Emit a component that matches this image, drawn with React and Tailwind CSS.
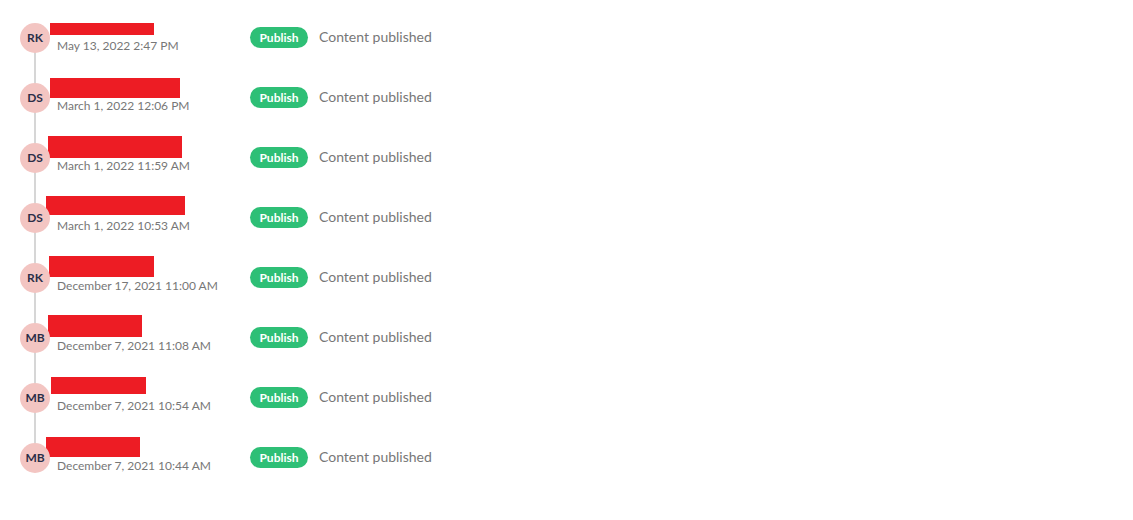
const rows = [
  { initials: 'RK', date: 'May 13, 2022 2:47 PM', mask: { left: 30, top: -15, width: 104, height: 12 } },
  { initials: 'DS', date: 'March 1, 2022 12:06 PM', mask: { left: 30, top: -20, width: 130, height: 20 } },
  { initials: 'DS', date: 'March 1, 2022 11:59 AM', mask: { left: 28, top: -22, width: 134, height: 22 } },
  { initials: 'DS', date: 'March 1, 2022 10:53 AM', mask: { left: 26, top: -22, width: 139, height: 19 } },
  { initials: 'RK', date: 'December 17, 2021 11:00 AM', mask: { left: 29, top: -22, width: 105, height: 21 } },
  { initials: 'MB', date: 'December 7, 2021 11:08 AM', mask: { left: 28, top: -23, width: 94, height: 22 } },
  { initials: 'MB', date: 'December 7, 2021 10:54 AM', mask: { left: 31, top: -21, width: 95, height: 17 } },
  { initials: 'MB', date: 'December 7, 2021 10:44 AM', mask: { left: 26, top: -21, width: 94, height: 20 } },
]

function Row({ initials, date, mask }) {
  return (
    <div className="relative flex h-[60px] items-center">
      <div className="z-10 flex h-[30px] w-[30px] shrink-0 items-center justify-center rounded-full bg-[#f3c5c2] text-[12px] font-bold text-[#2b2f48]">
        {initials}
      </div>
      <div className="ml-[7px] w-[193px] shrink-0">
        <div className="h-[16px] text-[14px] leading-[16px] text-[#333]">&nbsp;</div>
        <div className="text-[12px] leading-[16px] text-[#777]">{date}</div>
      </div>
      <div className="flex items-center self-start pt-[19px]">
        <span className="flex h-[21px] w-[58px] items-center justify-center rounded-full bg-[#2ebf76] text-[12px] font-bold leading-[21px] text-white">
          Publish
        </span>
        <span className="ml-[11px] -mt-[1px] text-[14px] leading-[20px] text-[#777]">Content published</span>
      </div>
      <div
        className="absolute bg-[#ed1c24]"
        style={{ left: mask.left, top: 30 + mask.top, width: mask.width, height: mask.height }}
      />
    </div>
  )
}

export default function App() {
  return (
    <div className="min-h-[520px] w-full bg-white font-['Lato','Liberation_Sans',sans-serif]">
      <div className="relative pl-[20px] pt-[8px]">
        <div className="absolute left-[34px] top-[38px] h-[420px] w-[2px] bg-[#d6d6d6]" />
        {rows.map((r, i) => (
          <Row key={i} {...r} />
        ))}
      </div>
    </div>
  )
}
